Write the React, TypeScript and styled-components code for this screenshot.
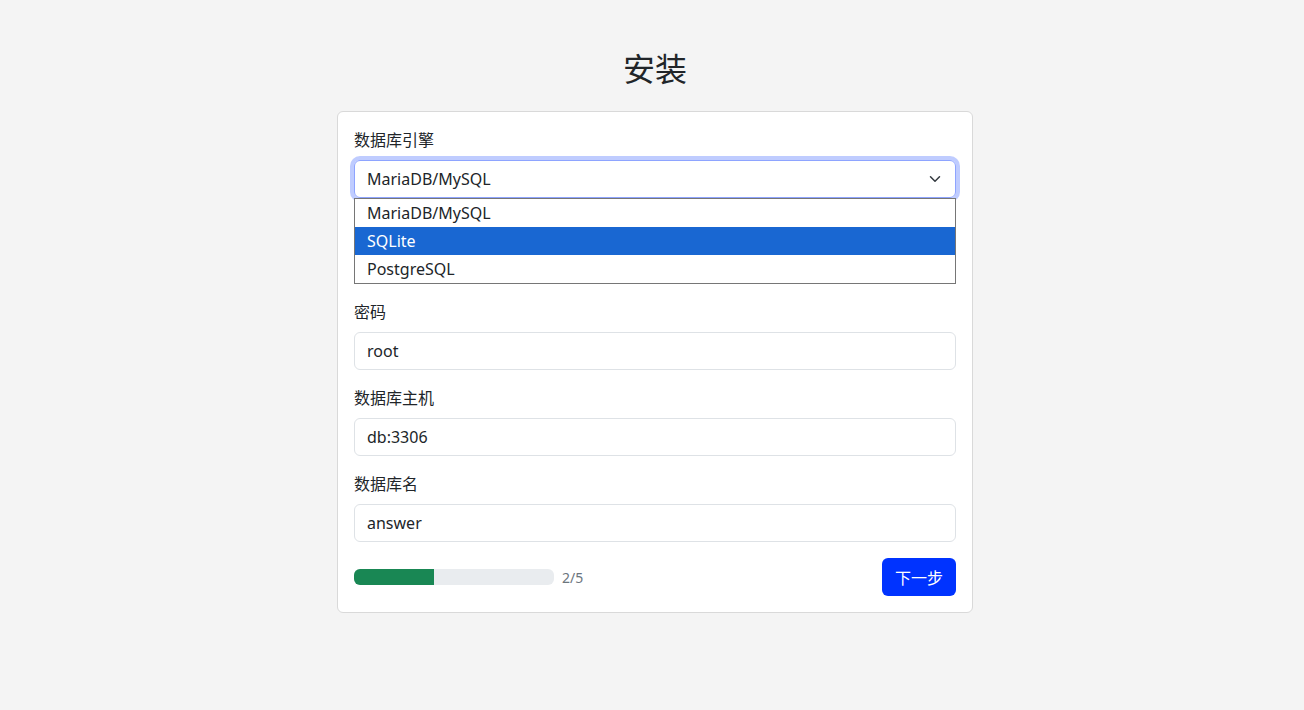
import styled, { createGlobalStyle } from "styled-components";

const GlobalStyle = createGlobalStyle`
    html, body {
        margin: 0;
        padding: 0;
        background: #f4f4f4;
        font-family: "Noto Sans", "Noto Sans CJK SC", sans-serif;
        color: #212529;
    }
`;

const engines = ["MariaDB/MySQL", "SQLite", "PostgreSQL"];

interface IFieldProps {
    readonly label: string;
    readonly value: string;
    readonly covered?: boolean;
}

const Field = ({ label, value, covered }: IFieldProps): JSX.Element => (
    <FieldStyled $covered={covered}>
        <LabelStyled>{label}</LabelStyled>
        <InputStyled>{value}</InputStyled>
    </FieldStyled>
);

const Chevron = () => (
    <svg width="16" height="12" viewBox="0 0 16 16" fill="none">
        <path d="m2 5 6 6 6-6" stroke="#343a40" strokeWidth="2" strokeLinecap="round" strokeLinejoin="round" />
    </svg>
);

export default function App(): JSX.Element {
    const step = 2;
    const total = 5;
    return (
        <>
            <GlobalStyle />
            <PageStyled>
                <TitleStyled>安装</TitleStyled>
                <CardStyled>
                    <FieldStyled>
                        <LabelStyled>数据库引擎</LabelStyled>
                        <SelectWrapStyled>
                            <SelectStyled>
                                <span>MariaDB/MySQL</span>
                                <Chevron />
                            </SelectStyled>
                            <OptionListStyled>
                                {engines.map((e) => (
                                    <OptionStyled key={e} $active={e === "SQLite"}>{e}</OptionStyled>
                                ))}
                            </OptionListStyled>
                        </SelectWrapStyled>
                    </FieldStyled>
                    {/* sits under the open option list */}
                    <Field label="用户名" value="root" covered />
                    <Field label="密码" value="root" />
                    <Field label="数据库主机" value="db:3306" />
                    <Field label="数据库名" value="answer" />
                    <FooterStyled>
                        <ProgressRowStyled>
                            <ProgressTrackStyled>
                                <ProgressFillStyled style={{ width: `${(step / total) * 100}%` }} />
                            </ProgressTrackStyled>
                            <StepTextStyled>{step}/{total}</StepTextStyled>
                        </ProgressRowStyled>
                        <ButtonStyled>下一步</ButtonStyled>
                    </FooterStyled>
                </CardStyled>
            </PageStyled>
        </>
    );
}

// [== STYLES ==]
const PageStyled = styled.div`
    display: flex;
    flex-direction: column;
    align-items: center;
    padding: 50px 0 0 6px;
    min-height: 710px;
    box-sizing: border-box;
`;

const TitleStyled = styled.h3`
    margin: 0 0 23px;
    font-size: 32px;
    font-weight: 400;
    line-height: 38px;
`;

const CardStyled = styled.div`
    width: 636px;
    box-sizing: border-box;
    background: #fff;
    border: 1px solid #d9d9d9;
    border-radius: 6px;
    padding: 16px;
`;

const FieldStyled = styled.div<{ $covered?: boolean }>`
    margin-bottom: 16px;
    visibility: ${(p) => (p.$covered ? "hidden" : "visible")};
`;

const LabelStyled = styled.div`
    font-size: 16px;
    line-height: 24px;
    margin-bottom: 8px;
`;

const InputStyled = styled.div`
    height: 38px;
    box-sizing: border-box;
    border: 1px solid #dee2e6;
    border-radius: 6px;
    padding: 0 12px;
    font-size: 16px;
    line-height: 36px;
`;

const SelectWrapStyled = styled.div`
    position: relative;
`;

const SelectStyled = styled.div`
    height: 38px;
    box-sizing: border-box;
    border: 1px solid #8ea4ff;
    border-radius: 6px;
    padding: 0 12px;
    font-size: 16px;
    line-height: 36px;
    display: flex;
    align-items: center;
    justify-content: space-between;
    box-shadow: 0 0 0 4px rgba(0, 51, 255, 0.25);
`;

const OptionListStyled = styled.div`
    position: absolute;
    top: 100%;
    left: 0;
    right: 0;
    z-index: 2;
    background: #fff;
    border: 1px solid #767676;
`;

const OptionStyled = styled.div<{ $active?: boolean }>`
    height: 28px;
    line-height: 28px;
    padding: 0 12px;
    font-size: 16px;
    background: ${(p) => (p.$active ? "#1967d2" : "#fff")};
    color: ${(p) => (p.$active ? "#fff" : "#212529")};
`;

const FooterStyled = styled.div`
    display: flex;
    align-items: center;
    justify-content: space-between;
`;

const ProgressRowStyled = styled.div`
    display: flex;
    align-items: center;
    gap: 8px;
`;

const ProgressTrackStyled = styled.div`
    width: 200px;
    height: 16px;
    border-radius: 6px;
    background: #e9ecef;
    overflow: hidden;
`;

const ProgressFillStyled = styled.div`
    height: 100%;
    background: #198754;
`;

const StepTextStyled = styled.span`
    font-size: 14px;
    color: #6c757d;
`;

const ButtonStyled = styled.button`
    height: 38px;
    padding: 0 13px;
    border: none;
    border-radius: 6px;
    background: #0033ff;
    color: #fff;
    font-family: inherit;
    font-size: 16px;
    cursor: pointer;
`;
